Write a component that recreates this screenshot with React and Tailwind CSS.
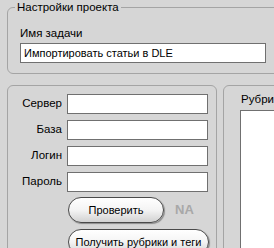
const fieldRows = ["Сервер", "База", "Логин", "Пароль"];

const Pill = ({ children, className = "" }) => (
  <button
    className={
      "h-[26px] rounded-full border border-[#4a4a4a] bg-gradient-to-b from-white via-[#f4f4f4] to-[#d2d2d2] text-[11px] text-black shadow-[1px_1px_1px_rgba(0,0,0,0.35)] " +
      className
    }
  >
    {children}
  </button>
);

const App = () => {
  return (
    <div
      className="w-[274px] h-[248px] overflow-hidden bg-[#d6d6d6] text-black"
      style={{ fontFamily: '"Liberation Sans", Arial, sans-serif' }}
    >
      <fieldset className="ml-[7px] w-[290px] rounded-[6px] border border-[#a4a4a4] pl-[12px] pr-[8px] pt-[11px] pb-[10px]">
        <legend className="-ml-[5px] px-[2px] text-[11.5px] leading-[15px]">
          Настройки проекта
        </legend>
        <div className="text-[11.5px] leading-[15px] mb-[2px]">Имя задачи</div>
        <div className="w-[246px] h-[20px] border border-[#707070] bg-white pl-[3px] text-[11px] leading-[18px]">
          Импортировать статьи в DLE
        </div>
      </fieldset>

      <div className="mt-[11px] ml-[7px] flex gap-[6px]">
        <div className="w-[210px] h-[200px] shrink-0 rounded-[6px] border border-[#a4a4a4] pt-[8px] pr-[8px]">
          <div className="grid grid-cols-[54px_141px] gap-x-[5px] gap-y-[6px] items-center">
            {fieldRows.map((label) => (
              <div key={label} className="contents">
                <div className="text-right text-[11.5px]">{label}</div>
                <div className="h-[20px] border border-[#707070] bg-white"></div>
              </div>
            ))}
          </div>
          <div className="ml-[60px] mt-[5px] flex items-center gap-[11px]">
            <Pill className="w-[96px]">Проверить</Pill>
            <span className="text-[13px] font-bold text-[#a8a8a8]">NA</span>
          </div>
          <div className="ml-[60px] mt-[6px]">
            <Pill className="w-[141px]">Получить рубрики и теги</Pill>
          </div>
        </div>

        <div className="w-[120px] h-[200px] shrink-0 rounded-[6px] border border-[#a4a4a4] pt-[6px] pl-[16px]">
          <div className="text-[11.5px] leading-[15px] mb-[3px] pl-[1px]">Рубрики</div>
          <div className="h-[150px] border border-[#707070] bg-white"></div>
        </div>
      </div>
    </div>
  );
};

export default App;
